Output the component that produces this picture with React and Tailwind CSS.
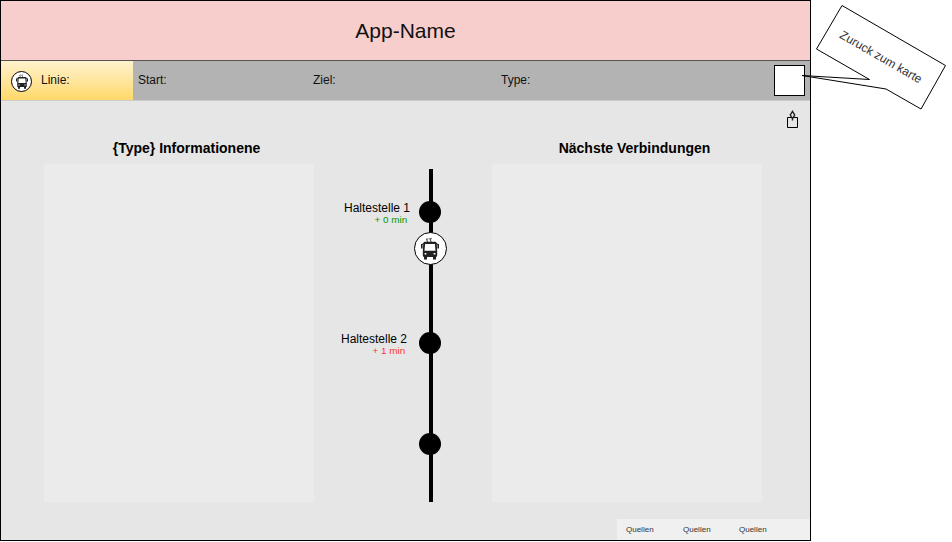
function TramIcon({ className }) {
  return (
    <svg viewBox="0 0 18 22" className={className} fill="none">
      <path d="M7 5 L5.2 1.4 M10.4 5 L8.6 .8 M5.2 1.8 L7.4 1.2 M8.6 1.6 L10.8 1" stroke="#555" strokeWidth="1.1" />
      <path
        fillRule="evenodd"
        fill="#222"
        d="M3.6 4.2 H14.4 Q15.6 4.4 15.7 6 L16.2 13.5 V18 Q16.2 19.4 15 19.4 H3 Q1.8 19.4 1.8 18 V13.5 L2.3 6 Q2.4 4.4 3.6 4.2 Z M4.1 6.4 L3.5 13.2 H14.5 L13.9 6.4 Z M3.6 15.6 V16.9 H5.4 V15.6 Z M12.6 15.6 V16.9 H14.4 V15.6 Z"
      />
      <path d="M3 18.8 H6 V22 H3 Z M12 18.8 H15 V22 H12 Z M0 6.6 H1.6 V11 H0 Z M16.4 6.6 H18 V11 H16.4 Z" fill="#222" />
      <path d="M.8 7 L3 6 M17.2 7 L15 6" stroke="#222" />
    </svg>
  );
}

function ShareIcon() {
  return (
    <svg width="13" height="19" viewBox="0 0 13 19" fill="none" stroke="#000">
      <path d="M1.5 7.5 H11.5 V17.5 H1.5 Z" />
      <path d="M6.5 10.5 V7 M6.5 1.4 L4.3 5 L6.5 8.6 L8.7 5 Z" stroke="#222" strokeWidth="1.4" />
    </svg>
  );
}

function Panel({ title, titleClassName }) {
  return (
    <section className="w-[270px]">
      <h2 className={`h-[23px] text-center text-sm leading-[16px] font-bold whitespace-nowrap ${titleClassName}`}>{title}</h2>
      <div className="h-[338px] bg-[#ebebeb]" />
    </section>
  );
}

function Stop({ className }) {
  return <div className={`absolute left-[105px] size-[22px] rounded-full bg-black ${className}`} />;
}

function Timeline() {
  return (
    <div className="relative h-[363px] w-[178px]">
      <div className="absolute top-[28px] left-[115px] h-[333px] w-1 bg-black" />
      <Stop className="top-[60px]" />
      <Stop className="top-[191px]" />
      <Stop className="top-[292px]" />
      <div className="absolute top-[60px] left-[30px] text-xs leading-[14px] whitespace-nowrap">Haltestelle 1</div>
      <div className="absolute top-[73px] left-[60.5px] text-[9.9px] leading-[12px] whitespace-nowrap text-[#009900]">+ 0 min</div>
      <div className="absolute top-[191px] left-[27px] text-xs leading-[14px] whitespace-nowrap">Haltestelle 2</div>
      <div className="absolute top-[204px] left-[58.5px] text-[9.9px] leading-[12px] whitespace-nowrap text-[#ff3333]">+ 1 min</div>
      <div className="absolute top-[91px] left-[99.5px] flex size-[33px] items-center justify-center rounded-full border border-black bg-white">
        <TramIcon className="h-[23px] w-[18px]" />
      </div>
    </div>
  );
}

function Callout() {
  return (
    <div className="absolute top-0 left-[800px] h-[115px] w-[152px]">
      <svg width="152" height="115" className="block">
        <polygon
          points="42,5.5 145.5,65.5 121,109 86,89 2,75.5 69.5,79.5 16.5,49"
          fill="#fff"
          stroke="#000"
        />
      </svg>
      <span className="absolute top-[57px] left-[81px] -translate-x-1/2 -translate-y-1/2 rotate-30 text-xs leading-[14px] whitespace-nowrap text-[#333]">
        Zuruck zum karte
      </span>
    </div>
  );
}

export default function App() {
  return (
    <div className="relative h-[542px] w-[952px] overflow-hidden bg-white font-['Liberation_Sans',Arial,sans-serif] text-[#111]">
      <div className="flex h-[541px] w-[811px] flex-col border border-black bg-[#e6e6e6]">
        <header className="flex h-[60px] shrink-0 items-center justify-center border-b border-[#555] bg-[#f8cecc] text-[21px]">
          App-Name
        </header>
        <nav className="flex h-[39px] shrink-0 items-center bg-[#b3b3b3] text-xs">
          <div className="flex h-full w-[132px] items-center bg-linear-to-b from-[#fff2cc] to-[#ffd966] pl-[10px]">
            <div className="mt-[2px] flex size-[21px] items-center justify-center rounded-full border border-black bg-white">
              <TramIcon className="h-[15px] w-[12px]" />
            </div>
            <span className="mb-[2px] ml-[9px]">Linie:</span>
          </div>
          <span className="mb-[2px] w-[175px] pl-[5px]">Start:</span>
          <span className="mb-[2px] w-[188px] pl-[5px]">Ziel:</span>
          <span className="mb-[2px] flex-1 pl-[5px]">Type:</span>
          <div className="mr-[5px] size-[31px] border border-black bg-white" />
        </nav>
        <div className="flex h-[41px] shrink-0 items-start justify-end border-t border-[#cccccc] pt-[9px] pr-[11px]">
          <ShareIcon />
        </div>
        <main className="flex h-[378px] shrink-0 pl-[43px] text-black">
          <Panel title="{Type} Informationene" titleClassName="-mt-px mb-px pl-[15px]" />
          <Timeline />
          <Panel title="Nächste Verbindungen" titleClassName="-mt-px mb-px pl-[15px]" />
        </main>
        <footer className="ml-auto flex h-[21px] w-[193px] shrink-0 items-center bg-[#f0f0f0] pl-[9px] text-[8px] text-[#333]">
          <span className="w-[57px]">Quellen</span>
          <span className="w-[56px]">Quellen</span>
          <span>Quellen</span>
        </footer>
      </div>
      <Callout />
    </div>
  );
}
